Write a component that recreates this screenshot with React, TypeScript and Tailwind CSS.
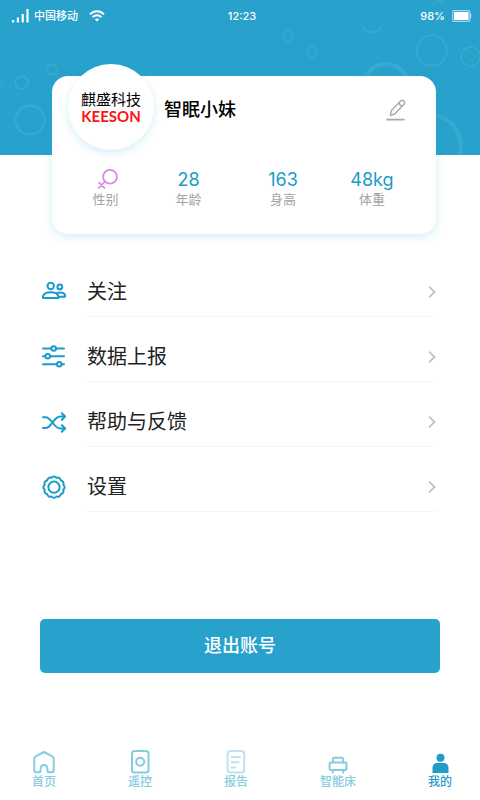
import type { ReactNode } from "react";

const MENU = [
  { label: "关注", icon: <FollowIcon /> },
  { label: "数据上报", icon: <SlidersIcon /> },
  { label: "帮助与反馈", icon: <ShuffleIcon /> },
  { label: "设置", icon: <GearIcon /> },
];

const TABS = [
  { label: "首页", icon: <HomeIcon />, active: false },
  { label: "遥控", icon: <RemoteIcon />, active: false },
  { label: "报告", icon: <ReportIcon />, active: false },
  { label: "智能床", icon: <BedIcon />, active: false },
  { label: "我的", icon: <PersonIcon />, active: true },
];

export default function App() {
  return (
    <div className="flex min-h-screen flex-col bg-white font-['Inter','Noto_Sans_CJK_SC',sans-serif]">
      <header className="relative h-[155px] overflow-hidden bg-[#28a2cc]">
        <Bubbles />
        <StatusBar />
      </header>

      <main className="flex flex-1 flex-col">
        <ProfileCard />

        <ul className="mt-[34px] flex flex-col gap-4 pr-11 pl-[42px]">
          {MENU.map((item) => (
            <li key={item.label}>
              <MenuRow label={item.label} icon={item.icon} />
            </li>
          ))}
        </ul>

        <div className="mt-auto px-10 pt-8">
          <button
            type="button"
            className="h-[54px] w-full rounded-[5px] bg-[#28a2cc] text-lg font-medium text-white"
          >
            退出账号
          </button>
        </div>
      </main>

      <nav className="mt-[77px] flex items-end justify-between pr-7 pb-[10px] pl-8">
        {TABS.map((tab) => (
          <a
            key={tab.label}
            href="#"
            className={`flex flex-col items-center text-xs leading-4 font-medium ${
              tab.active ? "text-[#1f9cc8]" : "text-[#85cce1]"
            }`}
          >
            {tab.icon}
            {tab.label}
          </a>
        ))}
      </nav>
    </div>
  );
}

function StatusBar() {
  return (
    <div className="relative grid h-8 grid-cols-3 items-center pr-2 pl-3 text-[11px] font-medium text-white">
      <div className="flex items-center">
        <svg className="h-4 w-[17px]" viewBox="0 0 17 16" fill="currentColor">
          <rect x="0" y="12" width="2.2" height="2.6" rx="0.5" />
          <rect x="4.8" y="9.5" width="2.2" height="5.1" rx="0.5" />
          <rect x="9.6" y="6" width="2.2" height="8.6" rx="0.5" />
          <rect x="14.4" y="1" width="2.2" height="13.6" rx="0.5" />
        </svg>
        <span className="ml-[5px]">中国移动</span>
        <svg
          className="ml-[11px] h-3 w-4"
          viewBox="0 0 16 12"
          fill="none"
          stroke="currentColor"
          strokeWidth="1.9"
        >
          <path d="M1 4.4C5 0.2 11 0.2 15 4.4" />
          <path d="M3.6 7.2C6.1 4.6 9.9 4.6 12.4 7.2" />
          <path d="M8 11.6 5.8 9.4C7 8.2 9 8.2 10.2 9.4Z" fill="currentColor" stroke="none" />
        </svg>
      </div>
      <span className="text-center">12:23</span>
      <div className="flex items-center justify-end gap-[7px]">
        <span>98%</span>
        <svg className="h-3 w-5" viewBox="0 0 20 12">
          <rect x="0.7" y="0.7" width="17.2" height="10.6" rx="1.6" fill="none" stroke="#a5d8ea" strokeWidth="1.2" />
          <rect x="2" y="2" width="14.6" height="8" rx="0.6" fill="#fff" />
          <path d="M18.4 3.6c1 .6 1 4.2 0 4.8Z" fill="#fff" />
        </svg>
      </div>
    </div>
  );
}

function Bubbles() {
  return (
    <svg
      className="absolute inset-0 h-full w-full"
      viewBox="0 0 480 155"
      preserveAspectRatio="xMidYMid slice"
      fill="none"
      stroke="#fff"
      strokeOpacity="0.08"
      strokeWidth="1.8"
    >
      <circle cx="51.5" cy="69.5" r="5" />
      <circle cx="21.5" cy="82.5" r="6.5" />
      <circle cx="30" cy="120" r="14.5" strokeWidth="2.4" />
      <circle cx="-5" cy="82" r="7" strokeOpacity="0.05" />
      <circle cx="288" cy="36" r="4.8" />
      <circle cx="312" cy="52" r="4.8" />
      <path d="M362.500 25.500a10 10 0 0 0 19 0" />
      <path d="M434 3.500a6 6 0 0 1 10 0" />
      <circle cx="431.700" cy="50.700" r="15" />
      <circle cx="470.700" cy="56.700" r="9.500" />
      <circle cx="470.700" cy="56.700" r="4" strokeOpacity="0.03" />
      <circle cx="386" cy="87" r="23" strokeWidth="4" />
      <circle cx="430" cy="146" r="31" strokeWidth="4" />
    </svg>
  );
}

function ProfileCard() {
  return (
    <section className="relative -mt-[79px] mr-11 ml-[52px] rounded-2xl bg-white pb-7 shadow-[0_3px_10px_rgba(40,170,210,0.2)]">
      <div className="flex items-start pr-[30px] pl-4">
        <div className="-mt-3 flex size-[86px] shrink-0 flex-col items-center justify-center rounded-full bg-white pt-0.5 shadow-[0_3px_8px_rgba(40,170,210,0.2)]">
          <span className="text-[15px] leading-4 text-black">麒盛科技</span>
          <span className="font-['Lato',sans-serif] text-[15px] leading-4 font-bold text-[#fa1414]">
            KEESON
          </span>
        </div>
        <div className="flex h-[68px] flex-1 items-center justify-between pl-[10px]">
          <h1 className="text-lg font-medium text-black">智眠小妹</h1>
          <button type="button" aria-label="编辑" className="text-[#aaaaaa]">
            <PencilIcon />
          </button>
        </div>
      </div>

      <dl className="mt-[18px] grid grid-cols-[79fr_87fr_102fr_76fr] pr-[26px] pl-[14px]">
        <Stat label="性别" value={<FemaleIcon />} />
        <Stat label="年龄" value="28" />
        <Stat label="身高" value="163" />
        <Stat label="体重" value="48kg" />
      </dl>
    </section>
  );
}

function Stat({ label, value }: { label: string; value: ReactNode }) {
  return (
    <div className="flex flex-col-reverse items-center">
      <dt className="text-[13px] leading-[14px] text-[#a3a3a3]">{label}</dt>
      <dd className="flex h-6 items-center text-lg text-[#1a9bc8]">{value}</dd>
    </div>
  );
}

function MenuRow({ label, icon }: { label: string; icon: ReactNode }) {
  return (
    <a href="#" className="flex h-[49px] items-center gap-5">
      <span className="text-[#1a9bc8]">{icon}</span>
      <span className="flex h-full flex-1 items-center justify-between border-b border-[#f6f6f6] pl-px text-xl text-[#222222]">
        {label}
        <svg
          className="h-3 w-2"
          viewBox="0 0 8 12"
          fill="none"
          stroke="#c2c2c2"
          strokeWidth="1.8"
        >
          <path d="M1 0.700 6.600 6 1 11.300" />
        </svg>
      </span>
    </a>
  );
}

function LineIcon({ children }: { children: ReactNode }) {
  return (
    <svg
      className="size-6 overflow-visible"
      viewBox="0 0 24 24"
      fill="none"
      stroke="currentColor"
      strokeWidth="2"
      strokeLinecap="round"
      strokeLinejoin="round"
    >
      {children}
    </svg>
  );
}

function FollowIcon() {
  return (
    <LineIcon>
      <circle cx="8.700" cy="5" r="3.200" />
      <circle cx="17.800" cy="5.900" r="2.400" />
      <path d="M1.200 17c-.8 0-.8-5.700 7.500-5.700s8.300 5.700 7.500 5.700Z" />
      <path d="M15 12c5.400-1.800 8.800.8 8 3.800h-6.500" />
    </LineIcon>
  );
}

function SlidersIcon() {
  return (
    <LineIcon>
      <path d="M1 2.500h8.200M14.300 2.500H22M1 10.300h2.200M8.300 10.300H22M1 18.200h13.700M19.800 18.200H22" />
      <circle cx="11.700" cy="2.500" r="2.300" />
      <circle cx="5.700" cy="10.300" r="2.300" />
      <circle cx="17.300" cy="18.200" r="2.300" />
    </LineIcon>
  );
}

function ShuffleIcon() {
  return (
    <LineIcon>
      <path d="M1 6.200h2.500c6.500 0 7.500 11.300 15 11.300H23" />
      <path d="M1 17h2.500C10 17 11 5.500 18.500 5.500H23" />
      <path d="m19.800 2.200 3.300 3.300-3.300 3.300M19.800 14.200l3.300 3.300-3.300 3.300" />
    </LineIcon>
  );
}

function GearIcon() {
  // twelve shallow scallops around the ring
  const points = Array.from({ length: 12 }, (_, i) => {
    const a = (i * Math.PI) / 6 + Math.PI / 12;
    return `${12 + 9.6 * Math.cos(a)} ${11.2 + 9.6 * Math.sin(a)}`;
  });
  const d = `M${points[0]}${points
    .slice(1)
    .concat(points[0])
    .map((p) => `A3 3 0 0 1 ${p}`)
    .join("")}Z`;
  return (
    <LineIcon>
      <path d={d} />
      <circle cx="12" cy="11.200" r="5.600" />
    </LineIcon>
  );
}

function HomeIcon() {
  return (
    <LineIcon>
      <path d="M12 2 3.600 6.300Q2.300 7 2.300 8.500V20.500Q2.300 22.200 4 22.200H7.500Q8.500 22.200 8.500 21V18.500a3.500 3.500 0 0 1 7 0V21Q15.500 22.200 16.500 22.200H20Q21.700 22.200 21.700 20.500V8.500Q21.700 7 20.400 6.300Z" />
    </LineIcon>
  );
}

function RemoteIcon() {
  return (
    <LineIcon>
      <rect x="4" y="1" width="16.500" height="21.500" rx="2.500" />
      <circle cx="12.200" cy="11.700" r="4" />
    </LineIcon>
  );
}

function ReportIcon() {
  return (
    <span className="text-[#bce4ef]">
      <LineIcon>
        <rect x="3.600" y="1" width="16.600" height="21.500" rx="2.500" />
        <path d="M7.500 7h8.500M7.500 12.200h7M7.500 17.500h4" />
      </LineIcon>
    </span>
  );
}

function BedIcon() {
  return (
    <LineIcon>
      <path d="M7 12.500V9q0-1.200 1.200-1.200h7.600Q17 7.800 17 9v3.500" />
      <rect x="3.600" y="12.500" width="16.800" height="7.500" rx="1" />
      <path d="M6.800 20v2.500M17.200 20v2.500" />
    </LineIcon>
  );
}

function PersonIcon() {
  return (
    <svg className="size-6" viewBox="0 0 24 24" fill="currentColor">
      <circle cx="12.500" cy="7.700" r="4" />
      <path d="M4.500 23v-4.500c0-4 2-5.500 5-5.500h6c3 0 5 1.500 5 5.500V23Z" />
    </svg>
  );
}

function FemaleIcon() {
  return (
    <svg
      className="ml-[3px] h-6 w-[22px]"
      viewBox="0 0 22 24"
      fill="none"
      stroke="#df86ee"
      strokeWidth="1.8"
      strokeLinecap="round"
    >
      <circle cx="14" cy="8.800" r="6.900" />
      <path d="m8.900 13.700-6.200 6.200M3 14.600l5.500 5.300" />
    </svg>
  );
}

function PencilIcon() {
  return (
    <svg
      className="h-[22px] w-5"
      viewBox="0 0 20 22"
      fill="none"
      stroke="currentColor"
      strokeWidth="1.400"
      strokeLinecap="round"
      strokeLinejoin="round"
    >
      <path d="M4.400 16.300 5.200 11.800 14.800 1.800Q16.300.5 17.900 2T18 5.200L8.700 15Z" />
      <path d="M12.900 3.900Q13.800 6.500 16.400 7.200" />
      <path d="M1 20.700h17" strokeWidth="1.700" />
    </svg>
  );
}
